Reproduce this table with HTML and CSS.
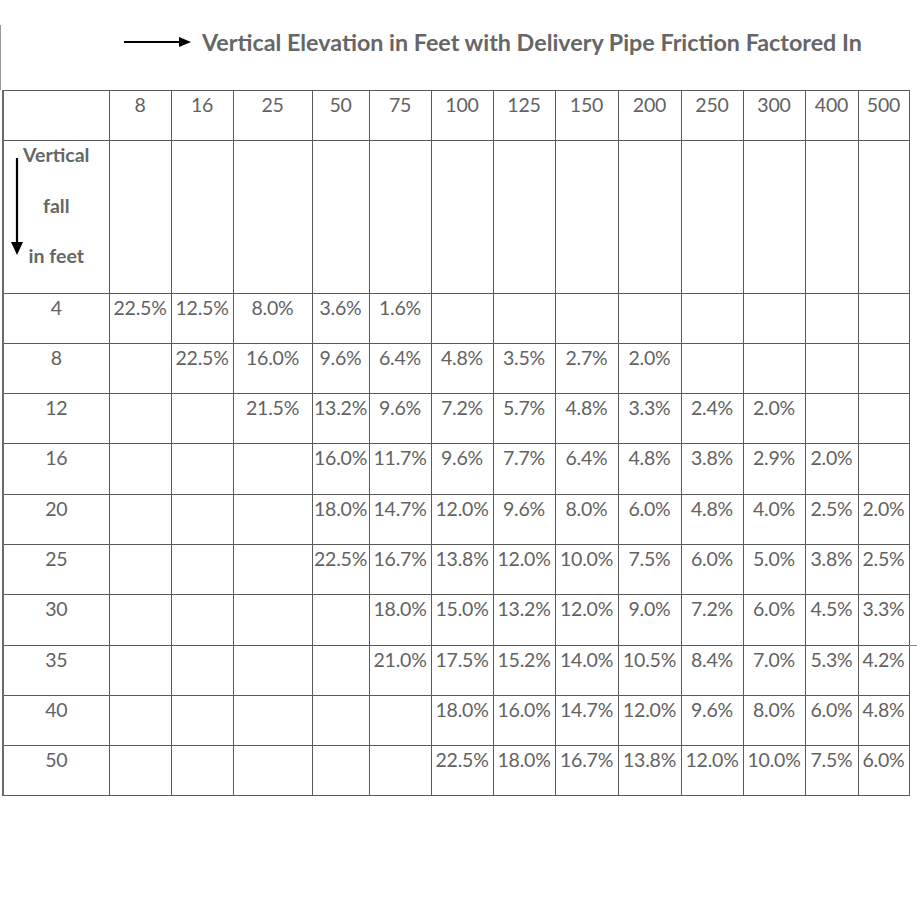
FILE: index.html
```html
<!DOCTYPE html>
<html>
<head>
<meta charset="utf-8">
<link rel="stylesheet" href="styles.css">
</head>
<body>
<div class="page">
  <div class="title-bar">
    <div class="title">
      <svg class="arrow-right" width="68" height="12" viewBox="0 0 68 12">
        <line x1="0" y1="6" x2="56" y2="6" stroke="#000" stroke-width="2.2"/>
        <polygon points="55,1 67,6 55,11" fill="#000"/>
      </svg>
      <span class="title-text">Vertical Elevation in Feet with Delivery Pipe Friction Factored In</span>
    </div>
  </div>
  <table class="grid">
    <colgroup>
      <col class="c0"><col class="c1"><col class="c2"><col class="c3"><col class="c4"><col class="c5"><col class="c6"><col class="c7"><col class="c8"><col class="c9"><col class="c10"><col class="c11"><col class="c12"><col class="c13">
    </colgroup>
    <tr class="head">
      <td></td><td>8</td><td>16</td><td>25</td><td>50</td><td>75</td><td>100</td><td>125</td><td>150</td><td>200</td><td>250</td><td>300</td><td>400</td><td>500</td>
    </tr>
    <tr class="fall">
      <td class="fall-cell">
        <div class="fall-inner">
          <svg class="arrow-down" width="14" height="98" viewBox="0 0 14 98">
            <line x1="7" y1="0" x2="7" y2="86" stroke="#000" stroke-width="2.2"/>
            <polygon points="1,84 13,84 7,97" fill="#000"/>
          </svg>
          <div class="fall-line">Vertical</div>
          <div class="fall-line">fall</div>
          <div class="fall-line">in feet</div>
        </div>
      </td>
      <td></td><td></td><td></td><td></td><td></td><td></td><td></td><td></td><td></td><td></td><td></td><td></td><td></td>
    </tr>
    <tr><td>4</td><td>22.5%</td><td>12.5%</td><td>8.0%</td><td>3.6%</td><td>1.6%</td><td></td><td></td><td></td><td></td><td></td><td></td><td></td><td></td></tr>
    <tr><td>8</td><td></td><td>22.5%</td><td>16.0%</td><td>9.6%</td><td>6.4%</td><td>4.8%</td><td>3.5%</td><td>2.7%</td><td>2.0%</td><td></td><td></td><td></td><td></td></tr>
    <tr><td>12</td><td></td><td></td><td>21.5%</td><td>13.2%</td><td>9.6%</td><td>7.2%</td><td>5.7%</td><td>4.8%</td><td>3.3%</td><td>2.4%</td><td>2.0%</td><td></td><td></td></tr>
    <tr><td>16</td><td></td><td></td><td></td><td>16.0%</td><td>11.7%</td><td>9.6%</td><td>7.7%</td><td>6.4%</td><td>4.8%</td><td>3.8%</td><td>2.9%</td><td>2.0%</td><td></td></tr>
    <tr><td>20</td><td></td><td></td><td></td><td>18.0%</td><td>14.7%</td><td>12.0%</td><td>9.6%</td><td>8.0%</td><td>6.0%</td><td>4.8%</td><td>4.0%</td><td>2.5%</td><td>2.0%</td></tr>
    <tr><td>25</td><td></td><td></td><td></td><td>22.5%</td><td>16.7%</td><td>13.8%</td><td>12.0%</td><td>10.0%</td><td>7.5%</td><td>6.0%</td><td>5.0%</td><td>3.8%</td><td>2.5%</td></tr>
    <tr><td>30</td><td></td><td></td><td></td><td></td><td>18.0%</td><td>15.0%</td><td>13.2%</td><td>12.0%</td><td>9.0%</td><td>7.2%</td><td>6.0%</td><td>4.5%</td><td>3.3%</td></tr>
    <tr class="ext"><td>35</td><td></td><td></td><td></td><td></td><td>21.0%</td><td>17.5%</td><td>15.2%</td><td>14.0%</td><td>10.5%</td><td>8.4%</td><td>7.0%</td><td>5.3%</td><td>4.2%</td></tr>
    <tr><td>40</td><td></td><td></td><td></td><td></td><td></td><td>18.0%</td><td>16.0%</td><td>14.7%</td><td>12.0%</td><td>9.6%</td><td>8.0%</td><td>6.0%</td><td>4.8%</td></tr>
    <tr><td>50</td><td></td><td></td><td></td><td></td><td></td><td>22.5%</td><td>18.0%</td><td>16.7%</td><td>13.8%</td><td>12.0%</td><td>10.0%</td><td>7.5%</td><td>6.0%</td></tr>
  </table>
</div>
</body>
</html>
```

FILE: styles.css
```css
html, body {
  margin: 0;
  padding: 0;
  background: #ffffff;
}

.page {
  width: 917px;
  height: 900px;
  font-family: Lato, "Open Sans", sans-serif;
  color: #626262;
  position: relative;
}

.title-bar {
  margin-top: 25px;
  height: 65px;
  border-left: 1.5px solid #9a9a9a;
  box-sizing: border-box;
}

.title {
  display: flex;
  align-items: center;
  padding-left: 123px;
  padding-top: 3px;
  gap: 10px;
}

.arrow-right {
  display: block;
  flex: none;
}

.title-text {
  font-weight: 700;
  font-size: 23.3px;
  color: #666666;
  white-space: nowrap;
}

.grid {
  border-collapse: collapse;
  table-layout: fixed;
  margin-left: 2px;
  width: 907px;
  font-size: 19.5px;
}

.grid td {
  border: 1px solid #5a5a5a;
  height: 50.3px;
  padding: 0;
  padding-top: 2px;
  vertical-align: top;
  text-align: center;
  white-space: nowrap;
  line-height: 24px;
  box-sizing: border-box;
  overflow: visible;
  letter-spacing: -0.2px;
}

.grid tr td:first-child {
  border-left: 2px solid #6a6a6a;
}

.c0 { width: 106px; }
.c1 { width: 62px; }
.c2 { width: 62px; }
.c3 { width: 79px; }
.c4 { width: 57px; }
.c5 { width: 62px; }
.c6 { width: 62px; }
.c7 { width: 62px; }
.c8 { width: 63px; }
.c9 { width: 63px; }
.c10 { width: 62px; }
.c11 { width: 62px; }
.c12 { width: 53px; }
.c13 { width: 51px; }

.grid tr.head td {
  height: 50px;
}

.grid tr.fall td {
  height: 151px;
}

.grid td.fall-cell {
  padding-top: 0;
}

.fall-inner {
  position: relative;
  display: flex;
  flex-direction: column;
}

.fall-line {
  height: 50.5px;
  line-height: 28px;
  font-weight: 700;
  color: #666666;
  letter-spacing: 0;
}

.arrow-down {
  position: absolute;
  left: 6px;
  top: 17px;
}

.grid tr.ext td:last-child {
  position: relative;
}

.grid tr.ext td:last-child::after {
  content: "";
  position: absolute;
  top: -1px;
  left: 100%;
  width: 12px;
  border-top: 1px solid #8a8a8a;
}
```
